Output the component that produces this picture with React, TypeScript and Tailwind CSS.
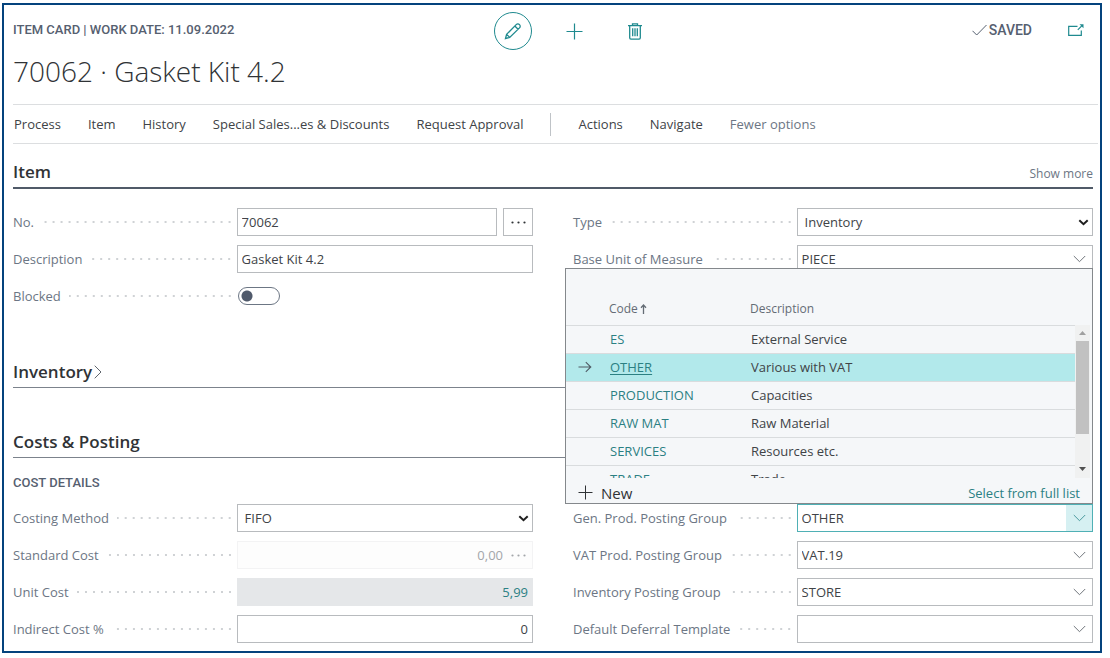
import { useState, type ReactNode } from "react";
import { clsx } from "clsx";

const groups = [
  { code: "ES", description: "External Service" },
  { code: "OTHER", description: "Various with VAT" },
  { code: "PRODUCTION", description: "Capacities" },
  { code: "RAW MAT", description: "Raw Material" },
  { code: "SERVICES", description: "Resources etc." },
  { code: "TRADE", description: "Trade" },
];

const boxClass = "h-7 w-full min-w-0 border border-[#b8bbbe] bg-white px-1 text-[#404347] outline-none";

function Chevron({ bold = false }: { bold?: boolean }) {
  return bold ? (
    <svg width="11" height="7" viewBox="0 0 11 7" fill="none" stroke="#1f1f1f" strokeWidth="2">
      <path d="M1.3 1.2 5.5 5.2 9.7 1.2" />
    </svg>
  ) : (
    <svg width="13" height="8" viewBox="0 0 13 8" fill="none" stroke="currentColor" strokeWidth="1">
      <path d="M.8 1 6.5 6.7 12.2 1" />
    </svg>
  );
}

function Dots() {
  return (
    <svg width="15" height="3" viewBox="0 0 15 3" fill="currentColor">
      <circle cx="1.5" cy="1.5" r="1.1" />
      <circle cx="7.5" cy="1.5" r="1.1" />
      <circle cx="13.5" cy="1.5" r="1.1" />
    </svg>
  );
}

function Field({ id, label, children }: { id: string; label: string; children: ReactNode }) {
  return (
    <div className="flex h-7 items-center">
      <div className="flex w-[43%] shrink-0 items-center pr-1.5">
        <label htmlFor={id} className="shrink-0 whitespace-nowrap text-[#6c7684]">
          {label}
        </label>
        <span className="ml-2 h-0.5 flex-1 bg-[linear-gradient(to_left,#cfd2d5_2px,transparent_2px)] bg-[length:8px_2px] bg-right" />
      </div>
      <div className="relative flex min-w-0 flex-1 items-center">{children}</div>
    </div>
  );
}

function SelectBox({ id, value }: { id: string; value: string }) {
  return (
    <>
      <select id={id} defaultValue={value} className={clsx(boxClass, "appearance-none pl-[7px]")}>
        <option>{value}</option>
      </select>
      <span className="pointer-events-none absolute right-1">
        <Chevron bold />
      </span>
    </>
  );
}

function Lookup({ id, value, active = false }: { id: string; value: string; active?: boolean }) {
  return (
    <div className={clsx("flex h-7 w-full border bg-white", active ? "border-[#4fb0b5]" : "border-[#b8bbbe]")}>
      <input id={id} defaultValue={value} className="min-w-0 flex-1 px-1 text-[#404347] outline-none" />
      <button
        type="button"
        aria-label="Open list"
        className={clsx(
          "flex w-[26px] items-center justify-center",
          active ? "bg-[#d6f0f2] text-[#4a9a9e]" : "text-[#70767c]",
        )}
      >
        <Chevron />
      </button>
    </div>
  );
}

function GroupPicker() {
  const [selected, setSelected] = useState("OTHER");

  return (
    <div className="absolute right-0 bottom-full z-10 w-[528px] border border-[#84888c] bg-[#f5f7f9] pr-0.5">
      <div className="flex h-[209px] overflow-hidden">
        <table className="h-max flex-1 table-fixed border-collapse text-left">
          <thead>
            <tr className="h-14 border-b border-[#d9dcde] align-bottom text-xs text-[#646c75]">
              <th className="w-[43px]" />
              <th className="w-[141px] pb-2 font-normal">
                <span className="flex items-center gap-0.5">
                  Code
                  <svg width="7" height="10" viewBox="0 0 7 10" fill="none" stroke="currentColor" strokeWidth="1.3">
                    <path d="M3.5 10V1M1 3.7 3.5 1 6 3.7" />
                  </svg>
                </span>
              </th>
              <th className="pb-2 font-normal">Description</th>
            </tr>
          </thead>
          <tbody>
            {groups.map(({ code, description }) => (
              <tr
                key={code}
                onClick={() => setSelected(code)}
                className={clsx("h-7 border-b border-[#d9dcde]", selected === code && "bg-[#b2e9eb]")}
              >
                <td className="pl-3">
                  {selected === code && (
                    <svg width="14" height="12" viewBox="0 0 14 12" fill="none" stroke="#505c66" strokeWidth="1.1">
                      <path d="M.5 6h12M7.8 1.2 12.8 6l-5 4.8" />
                    </svg>
                  )}
                </td>
                <td className="pl-px">
                  <a
                    href="#"
                    className={clsx("text-[#2b8083] underline-offset-2", selected === code && "underline")}
                  >
                    {code}
                  </a>
                </td>
                <td className="pl-px text-[#404347]">{description}</td>
              </tr>
            ))}
          </tbody>
        </table>
        <div className="mt-14 flex w-[15px] flex-col items-center bg-[#f0f1f1]">
          <span className="flex h-4 items-center">
            <svg width="7" height="4" viewBox="0 0 7 4" fill="#a0a0a0">
              <path d="M0 4 3.5 0 7 4z" />
            </svg>
          </span>
          <span className="h-[93px] w-[13px] bg-[#c1c1c1]" />
          <span className="mt-auto flex h-[18px] items-center">
            <svg width="7" height="4" viewBox="0 0 7 4" fill="#505050">
              <path d="M0 0h7L3.5 4z" />
            </svg>
          </span>
        </div>
      </div>
      <div className="flex h-[25px] items-center justify-between pt-1 pr-2.5 pl-3">
        <button type="button" className="flex items-center gap-2 text-[15px] text-[#303336]">
          <svg width="15" height="15" viewBox="0 0 15 15" stroke="currentColor" strokeWidth="1">
            <path d="M7.5 .5v14M.5 7.5h14" />
          </svg>
          New
        </button>
        <a href="#" className="text-[#2b8083]">
          Select from full list
        </a>
      </div>
    </div>
  );
}

function Header() {
  return (
    <header className="flex h-[38px] items-center pr-[9px]">
      <div className="w-[481px] shrink-0 pb-0.5 font-['Roboto',sans-serif] text-[13px] font-medium text-[#566070]">
        ITEM CARD | WORK DATE: 11.09.2022
      </div>
      <div className="flex items-center text-[#1f8a8f]">
        <button
          type="button"
          aria-label="Edit"
          className="flex size-[38px] items-center justify-center rounded-full border border-current"
        >
          <svg width="18" height="18" viewBox="0 0 18 18" fill="none" stroke="currentColor" strokeWidth="1.3">
            <path d="M1.5 16.5 2.6 12.4 12.2 2.6a2.3 2.3 0 0 1 3.3 3.3L5.7 15.4zM2.6 12.4 5.7 15.4M10.8 4l3.3 3.3" />
          </svg>
        </button>
        <button type="button" aria-label="New" className="ml-[34px]">
          <svg width="17" height="17" viewBox="0 0 17 17" stroke="currentColor" strokeWidth="1.2">
            <path d="M8.5 .5v16M.5 8.5h16" />
          </svg>
        </button>
        <button type="button" aria-label="Delete" className="ml-[45px]">
          <svg width="14" height="17" viewBox="0 0 14 17" fill="none" stroke="currentColor" strokeWidth="1.3">
            <path d="M0 2.7h14M4.5 2.5V.8h5v1.7M1.7 2.7v12.1q0 1.4 1.2 1.4h8.2q1.2 0 1.2-1.4V2.7M4.7 5.3v8M7 5.3v8M9.3 5.3v8" />
          </svg>
        </button>
      </div>
      <div className="ml-auto flex items-center pb-0.5 font-['Roboto',sans-serif] text-sm text-[#566070]">
        <svg width="15" height="12" viewBox="0 0 15 12" fill="none" stroke="currentColor" strokeWidth="1">
          <path d="M.5 6.8 4.7 11 14.5 1" />
        </svg>
        <span className="ml-0.5 font-medium">SAVED</span>
        <button type="button" aria-label="Open in new window" className="ml-9 text-[#1f8a8f]">
          <svg width="16" height="12" viewBox="0 0 16 12" fill="none" stroke="currentColor" strokeWidth="1.2">
            <path d="M9.5 2.4H.7v9h12.6V6.5M9.8 5.8 14 1.6" />
            <path d="M11.5 .3h4v4z" fill="currentColor" stroke="none" />
          </svg>
        </button>
      </div>
    </header>
  );
}

function Toolbar() {
  return (
    <nav className="-mr-[5px] flex h-10 items-center gap-[27px] border-y border-[#dcdee0] pl-px whitespace-nowrap text-[#404347]">
      <button type="button">Process</button>
      <button type="button">Item</button>
      <button type="button">History</button>
      <button type="button">Special Sales...es &amp; Discounts</button>
      <button type="button">Request Approval</button>
      <span className="h-[23px] w-px bg-[#bfc3c7]" />
      <button type="button">Actions</button>
      <button type="button">Navigate</button>
      <button type="button" className="text-[#6c7684]">
        Fewer options
      </button>
    </nav>
  );
}

export default function App() {
  const [blocked, setBlocked] = useState(false);

  return (
    <div className="mt-[3px] mr-2 mb-[5px] ml-0.5 border-2 border-[#04437d] bg-white pt-[7px] pr-[7px] pb-2 pl-[9px] font-['Open_Sans','Noto_Sans',sans-serif] text-[13px] leading-5">
      <Header />
      <h1 className="mb-3 text-[28px] leading-[42px] font-light text-[#303336]">70062 · Gasket Kit 4.2</h1>
      <Toolbar />

      <section>
        <div className="mt-[13px] flex h-8 items-center justify-between border-b-2 border-[#505a68]">
          <h2 className="text-[17px] font-semibold text-[#303336]">Item</h2>
          <button type="button" className="pt-1 text-xs text-[#6c7684]">
            Show more
          </button>
        </div>
        <div className="mt-[19px] grid grid-cols-2 gap-x-10">
          <div className="flex flex-col gap-[9px]">
            <Field id="no" label="No.">
              <input id="no" defaultValue="70062" className={boxClass} />
              <button
                type="button"
                aria-label="Pick number"
                className="ml-1.5 flex h-7 w-[30px] shrink-0 items-center justify-center border border-[#b8bbbe] text-[#303336]"
              >
                <Dots />
              </button>
            </Field>
            <Field id="description" label="Description">
              <input id="description" defaultValue="Gasket Kit 4.2" className={boxClass} />
            </Field>
            <Field id="blocked" label="Blocked">
              <input
                id="blocked"
                type="checkbox"
                role="switch"
                checked={blocked}
                onChange={(e) => setBlocked(e.target.checked)}
                className="ml-px h-[18px] w-[42px] appearance-none rounded-full border border-[#6c7684] bg-[radial-gradient(circle_at_8px_8px,#505a6b_5px,transparent_6px)] checked:bg-[radial-gradient(circle_at_32px_8px,#505a6b_5px,transparent_6px)]"
              />
            </Field>
          </div>
          <div className="flex flex-col gap-[9px]">
            <Field id="type" label="Type">
              <SelectBox id="type" value="Inventory" />
            </Field>
            <Field id="unit" label="Base Unit of Measure">
              <Lookup id="unit" value="PIECE" />
            </Field>
          </div>
        </div>
      </section>

      <section className="mt-[46px] flex h-8 items-center border-b border-[#7c838c]">
        <h2 className="text-[17px] font-semibold text-[#303336]">
          <button type="button" className="flex items-center gap-0.5">
            Inventory
            <svg width="8" height="14" viewBox="0 0 8 14" fill="none" stroke="#60666d" strokeWidth="1">
              <path d="M.7 .7 7 7 .7 13.3" />
            </svg>
          </button>
        </h2>
      </section>

      <section className="mt-[38px]">
        <div className="flex h-8 items-center border-b border-[#7c838c]">
          <h2 className="text-[17px] font-semibold text-[#303336]">Costs &amp; Posting</h2>
        </div>
        <h3 className="mt-[15px] font-['Roboto',sans-serif] text-[13px] leading-5 font-medium text-[#566070]">
          COST DETAILS
        </h3>
        <div className="mt-[11px] grid grid-cols-2 gap-x-10">
          <div className="flex flex-col gap-[9px]">
            <Field id="costing" label="Costing Method">
              <SelectBox id="costing" value="FIFO" />
            </Field>
            <Field id="standard" label="Standard Cost">
              <div className="flex h-7 w-full items-center border border-[#f3f3f4] bg-[#fdfdfd] pr-1.5 text-[#a3a6aa]">
                <input id="standard" disabled defaultValue="0,00" className="min-w-0 flex-1 text-right" />
                <button type="button" disabled aria-label="Adjust cost" className="ml-2">
                  <Dots />
                </button>
              </div>
            </Field>
            <Field id="unitcost" label="Unit Cost">
              <input
                id="unitcost"
                readOnly
                defaultValue="5,99"
                className="h-7 w-full bg-[#e5e7e9] pr-[5px] text-right text-[#2b8083] outline-none"
              />
            </Field>
            <Field id="indirect" label="Indirect Cost %">
              <input id="indirect" defaultValue="0" className={clsx(boxClass, "text-right")} />
            </Field>
          </div>
          <div className="flex flex-col gap-[9px]">
            <div className="relative">
              <Field id="gen" label="Gen. Prod. Posting Group">
                <Lookup id="gen" value="OTHER" active />
              </Field>
              <GroupPicker />
            </div>
            <Field id="vat" label="VAT Prod. Posting Group">
              <Lookup id="vat" value="VAT.19" />
            </Field>
            <Field id="invgroup" label="Inventory Posting Group">
              <Lookup id="invgroup" value="STORE" />
            </Field>
            <Field id="deferral" label="Default Deferral Template">
              <Lookup id="deferral" value="" />
            </Field>
          </div>
        </div>
      </section>
    </div>
  );
}
